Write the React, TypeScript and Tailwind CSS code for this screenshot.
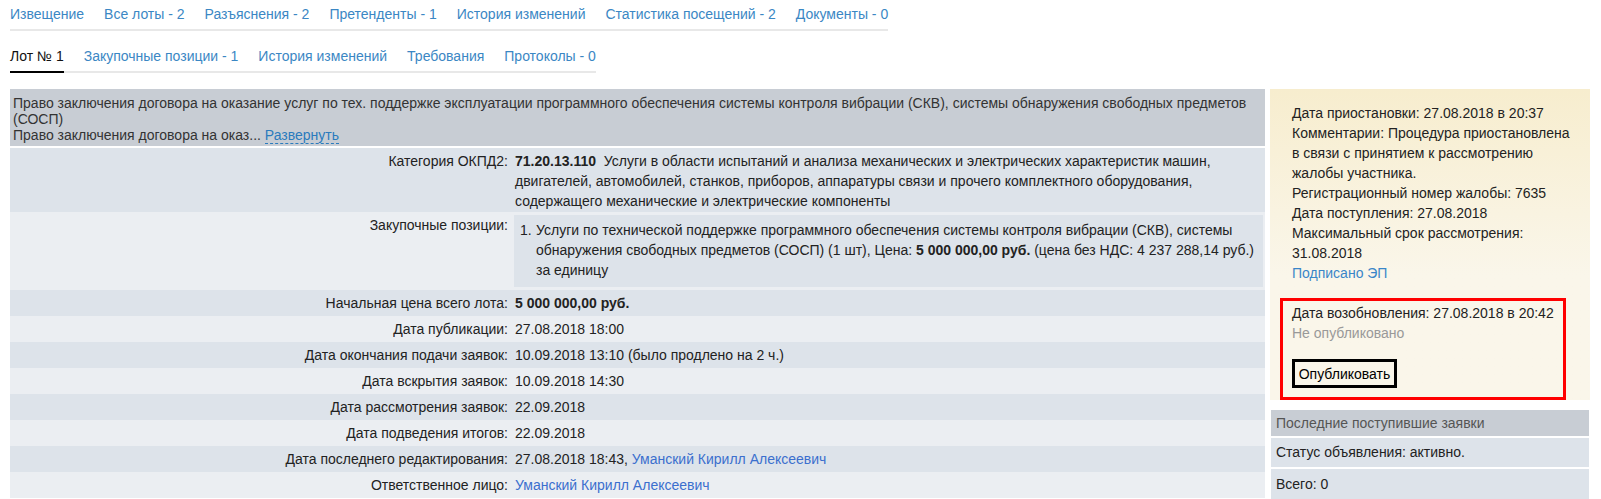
import React from "react";

const topTabs = [
  "Извещение",
  "Все лоты - 2",
  "Разъяснения - 2",
  "Претенденты - 1",
  "История изменений",
  "Статистика посещений - 2",
  "Документы - 0",
];

const lotTabs = [
  "Закупочные позиции - 1",
  "История изменений",
  "Требования",
  "Протоколы - 0",
];

function Row({
  label,
  children,
  dark,
}: {
  label: string;
  children: React.ReactNode;
  dark: boolean;
}) {
  return (
    <div className={`flex leading-[20px] py-[3px] ${dark ? "bg-[#dde3ea]" : "bg-[#ebeef2]"}`}>
      <div className="w-[498px] shrink-0 text-right">{label}</div>
      <div className="pl-[7px]">{children}</div>
    </div>
  );
}

export default function App() {
  const person = <span className="text-[#3b6fce]">Уманский Кирилл Алексеевич</span>;
  return (
    <div className="w-[1601px] h-[499px] overflow-hidden bg-white text-[14px] text-[#222] font-['Liberation_Sans',Arial,sans-serif]">
      <div className="pl-[10px] pt-[4px]">
        <div>
          <nav className="inline-flex gap-[20px] border-b-2 border-[#e8e8e8] pb-[5px] leading-[20px]">
            {topTabs.map((t) => (
              <span key={t} className="text-[#3b87c4] whitespace-nowrap">
                {t}
              </span>
            ))}
          </nav>
        </div>
        <div className="mt-[15px]">
          <nav className="inline-flex items-start gap-[20px] border-b-2 border-[#e8e8e8] leading-[20px]">
            <span className="pb-[5px] border-b-2 border-black -mb-[2px] text-[#111] whitespace-nowrap">
              Лот № 1
            </span>
            {lotTabs.map((t) => (
              <span key={t} className="pb-[5px] text-[#3b87c4] whitespace-nowrap">
                {t}
              </span>
            ))}
          </nav>
        </div>

        <div className="mt-[16px] flex items-start gap-[5px]">
          {/* left table */}
          <div className="w-[1255px] shrink-0">
            <div className="bg-[#c8cdd4] text-[#333] leading-[16px] pl-[3px] pt-[6px] pb-[3px] h-[57px]">
              Право заключения договора на оказание услуг по тех. поддержке эксплуатации программного обеспечения системы контроля вибрации (СКВ), системы обнаружения свободных предметов
              <br />
              (СОСП)
              <br />
              Право заключения договора на оказ...{" "}
              <span className="text-[#2b7bbd] border-b border-dashed border-[#2b7bbd]">Развернуть</span>
            </div>
            <div className="h-[2px] bg-white" />
            <div className="flex leading-[20px] pt-[3px] pb-[1px] bg-[#dde3ea]">
              <div className="w-[498px] shrink-0 text-right">Категория ОКПД2:</div>
              <div className="pl-[7px]">
                <b>71.20.13.110</b>&nbsp; Услуги в области испытаний и анализа механических и электрических характеристик машин,
                <br />
                двигателей, автомобилей, станков, приборов, аппаратуры связи и прочего комплектного оборудования,
                <br />
                содержащего механические и электрические компоненты
              </div>
            </div>
            <div className="flex leading-[20px] pt-[3px] pb-[3px] bg-[#ebeef2]">
              <div className="w-[498px] shrink-0 text-right">Закупочные позиции:</div>
              <div className="flex-1 pl-[6px] pr-[2px]">
                <div className="bg-[#dde3ea] pl-[6px] pt-[5px] pb-[7px] flex">
                  <span className="w-[16px] shrink-0">1.</span>
                  <span>
                    Услуги по технической поддержке программного обеспечения системы контроля вибрации (СКВ), системы
                    <br />
                    обнаружения свободных предметов (СОСП) (1 шт), Цена: <b>5 000 000,00 руб.</b> (цена без НДС: 4 237 288,14 руб.)
                    <br />
                    за единицу
                  </span>
                </div>
              </div>
            </div>
            <Row label="Начальная цена всего лота:" dark>
              <b>5 000 000,00 руб.</b>
            </Row>
            <Row label="Дата публикации:" dark={false}>
              27.08.2018 18:00
            </Row>
            <Row label="Дата окончания подачи заявок:" dark>
              10.09.2018 13:10 (было продлено на 2 ч.)
            </Row>
            <Row label="Дата вскрытия заявок:" dark={false}>
              10.09.2018 14:30
            </Row>
            <Row label="Дата рассмотрения заявок:" dark>
              22.09.2018
            </Row>
            <Row label="Дата подведения итогов:" dark={false}>
              22.09.2018
            </Row>
            <Row label="Дата последнего редактирования:" dark>
              27.08.2018 18:43, {person}
            </Row>
            <Row label="Ответственное лицо:" dark={false}>
              {person}
            </Row>
          </div>

          {/* right column */}
          <div className="w-[320px] shrink-0">
            <div className="bg-linear-to-b from-[#f7edce] to-[#faf6ea] to-60% pt-[14px] leading-[20px] text-[#222]">
              <div className="pl-[22px]">
                Дата приостановки: 27.08.2018 в 20:37
                <br />
                Комментарии: Процедура приостановлена
                <br />
                в связи с принятием к рассмотрению
                <br />
                жалобы участника.
                <br />
                Регистрационный номер жалобы: 7635
                <br />
                Дата поступления: 27.08.2018
                <br />
                Максимальный срок рассмотрения:
                <br />
                31.08.2018
                <br />
                <span className="text-[#3a86c8]">Подписано ЭП</span>
              </div>
              <div className="ml-[10px] mt-[15px] -mb-[2px] w-[286px] border-[3px] border-[#ff0000] pl-[9px] pt-[2px] pb-[9px] relative">
                <div>Дата возобновления: 27.08.2018 в 20:42</div>
                <div className="text-[#999]">Не опубликовано</div>
                <div className="mt-[16px] w-[105px] h-[29px] border-[3px] border-black flex items-center justify-center text-black">
                  Опубликовать
                </div>
              </div>
            </div>
            <div className="mt-[12px] ml-[1px] w-[318px]">
              <div className="bg-[#c8cdd4] text-[#555] h-[26px] pl-[5px] leading-[26px]">
                Последние поступившие заявки
              </div>
              <div className="h-[2px] bg-white" />
              <div className="bg-[#dde3ea] h-[29px] pl-[5px] leading-[29px]">Статус объявления: активно.</div>
              <div className="h-[2px] bg-white" />
              <div className="bg-[#dde3ea] h-[30px] pl-[5px] leading-[30px]">Всего: 0</div>
            </div>
          </div>
        </div>
      </div>
    </div>
  );
}
